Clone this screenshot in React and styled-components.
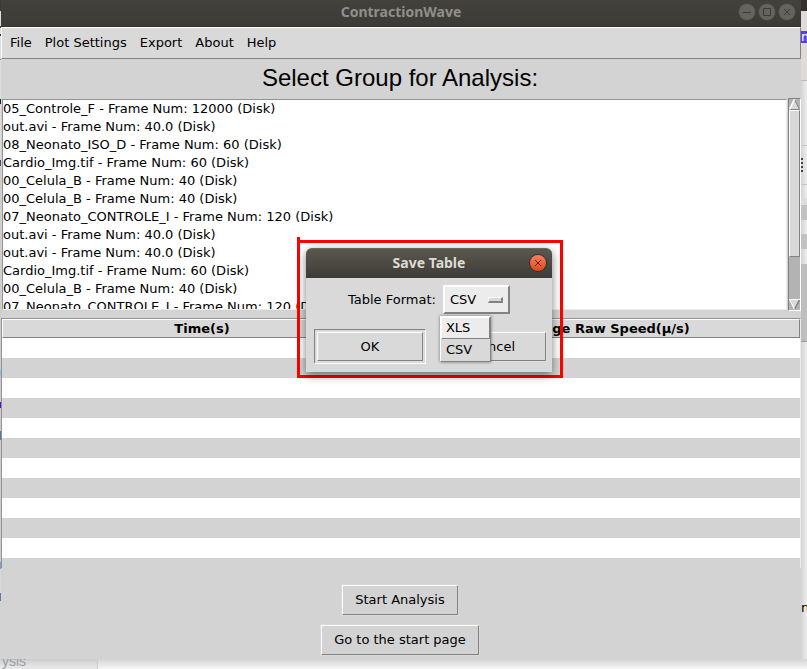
import React from "react";
import styled, { createGlobalStyle, css } from "styled-components";

const GlobalStyle = createGlobalStyle`
  *, *::before, *::after { box-sizing: border-box; }
  body {
    margin: 0;
    background: #f4f4f4;
    color: #000;
    font: 13px/18px "DejaVu Sans", sans-serif;
  }
  button, select { font: inherit; color: inherit; border-radius: 0; }
`;

const Desktop = styled.div`
  position: relative;
  display: grid;
  grid-template-columns: 1px minmax(0, 1fr) 6px;
  grid-template-rows: auto minmax(10px, 1fr);
  min-height: 100vh;
  overflow: hidden;
`;

const LeftEdge = styled.div`
  background: linear-gradient(
    #3c3b37 11px, #dedede 11px 26px, #444 26px 28px, #ddd 28px 34px, #333 34px 36px,
    #ddd 36px 59px, #888 59px 60px, #ddd 60px 99px, #124 99px 104px, #ddd 104px 160px,
    #447 160px 166px, #ccc 166px 370px, #8cc4e4 370px 377px, #ccc 377px 402px,
    #5010c8 402px 408px, #ccc 408px 431px, #5078b8 431px 440px, #ccc 440px 562px,
    #6fa2d8 562px 569px, #d8d8d8 569px 593px, #6478b0 593px 601px, #d0d4d8 601px
  );
`;

const RightEdge = styled.div`
  display: flex;
  flex-direction: column;
  overflow: hidden;
  background: #f0f0f0;
  box-shadow: inset 6px 0 6px -4px rgba(0, 0, 0, 0.16);
`;

const Strip = styled.div`
  flex: none;
  height: ${(p) => p.$h}px;
  background: ${(p) => p.$c || "transparent"};
  color: ${(p) => p.$ink || "#000"};
  line-height: ${(p) => p.$h}px;
  white-space: nowrap;
`;

const Dots = styled.div`
  flex: none;
  width: 2px;
  height: 14px;
  background: repeating-linear-gradient(#444 0 2px, transparent 2px 4px);
`;

const Beneath = styled.div`
  grid-column: 1 / -1;
  display: flex;
  overflow: hidden;
  background: linear-gradient(#d4d4d4, #f6f6f6 10px);
`;

const BeneathLabel = styled.div`
  width: 98px;
  height: 10px;
  padding-left: 2px;
  border-right: 1px solid #ccc;
  background: linear-gradient(#ccc, #e6e6e6 8px);
  color: #999ca4;
  font: 14px/4px "Liberation Sans", Arial, sans-serif;
`;

const AppWindow = styled.main`
  display: flex;
  flex-direction: column;
  background: #d3d3d3;
`;

const TitleBar = styled.header`
  position: relative;
  display: flex;
  align-items: center;
  justify-content: center;
  height: 27px;
  padding-bottom: 3px;
  background: linear-gradient(#42413c, #3c3b37);
  border-bottom: 1px solid #33322f;
  color: #918f88;
  font: bold 14px/20px "Noto Sans", "Open Sans", sans-serif;
`;

const WindowControls = styled.div`
  position: absolute;
  top: 4px;
  right: 6px;
  display: flex;
  gap: 4px;
`;

const RoundButton = styled.button`
  display: grid;
  place-items: center;
  width: 16px;
  height: 16px;
  padding: 0;
  border: 0;
  border-radius: 50%;
  background: ${(p) => (p.$close ? "linear-gradient(#f58060, #de4a1d)" : "#65635d")};
  color: ${(p) => (p.$close ? "#5d2412" : "#3c3b37")};
  box-shadow: 0 0 0 1px ${(p) => (p.$close ? "#35302b" : "#484741")};
  svg { display: block; width: 16px; height: 16px; fill: none; stroke: currentColor; }
`;

const raised = css`
  border: 1px solid;
  border-color: #fff #828282 #828282 #fff;
`;

const MenuBar = styled.nav`
  display: flex;
  gap: 13px;
  height: 32px;
  padding: 0 8px;
  align-items: center;
  background: #d9d9d9;
  ${raised}
`;

const MenuItem = styled.button`
  padding: 0;
  border: 0;
  background: none;
`;

const Heading = styled.h1`
  margin: 0;
  padding: 4px 2px 5px 0;
  text-align: center;
  font: 24px/30px "Liberation Sans", Arial, sans-serif;
`;

const ListArea = styled.section`
  display: flex;
  gap: 1px;
  height: 213px;
`;

const FileList = styled.ul`
  flex: 1;
  min-width: 0;
  height: 211px;
  margin: 1px 0 0 1px;
  padding: 0;
  overflow: hidden;
  list-style: none;
  background: #fff;
  border: 1px solid;
  border-color: #929292 #ececec #ececec #929292;
`;

const FileRow = styled.li`
  height: 18px;
  line-height: 17px;
  white-space: nowrap;
`;

const ScrollTrack = styled.div`
  display: flex;
  flex-direction: column;
  width: 13px;
  background: #b3b3b3;
  border: 1px solid;
  border-color: #828282 #fff #fff #828282;
`;

const ArrowButton = styled.button`
  height: 11px;
  padding: 0;
  border: 0;
  background: none;
  svg { display: block; width: 11px; height: 11px; }
`;

const Thumb = styled.div`
  height: 147px;
  margin-bottom: auto;
  background: #d9d9d9;
  ${raised}
`;

const TableFrame = styled.section`
  margin-top: 7px;
  height: 250px;
  border-left: 1px solid #929292;
  border-top: 1px solid #929292;
  border-right: 1px solid #ececec;
`;

const DataTable = styled.table`
  width: 100%;
  table-layout: fixed;
  border-collapse: separate;
  border-spacing: 0;
  th {
    height: 19px;
    padding: 0;
    background: #d9d9d9;
    border: solid;
    border-width: 1px 0;
    border-color: #fff #828282 #828282 #fff;
    font-size: 13px;
    line-height: 17px;
    font-weight: bold;
  }
  th:first-child { border-left-width: 1px; }
  th:last-child { border-right-width: 1px; }
  td { height: 20px; padding: 0; background: #fff; }
  tr:nth-child(even) td { background: #d3d3d3; }
`;

const Footer = styled.footer`
  display: flex;
  flex-direction: column;
  align-items: center;
  gap: 10px;
  padding: 17px 2px 4px 0;
`;

const PushButton = styled.button`
  height: 30px;
  padding: 0 12px;
  background: ${(p) => p.$bg || "#d3d3d3"};
  ${raised}
  box-shadow: 0 0 0 1px rgba(255, 255, 255, 0.15);
`;

const Highlight = styled.div`
  position: absolute;
  top: 240px;
  left: 297px;
  padding: 5px 8px 3px 6px;
  border: 3px solid #f00;
  &::before {
    content: "";
    position: absolute;
    top: -6px;
    left: -3px;
    width: 3px;
    height: 6px;
    background: #f00;
  }
`;

const Dialog = styled.section`
  width: 246px;
  background: #d9d9d9;
  border-radius: 6px 6px 0 0;
  box-shadow: 0 3px 10px rgba(0, 0, 0, 0.5);
`;

const DialogTitle = styled.header`
  position: relative;
  height: 30px;
  border-radius: 6px 6px 0 0;
  background: linear-gradient(#5a574e, #3d3c37);
  border-top: 1px solid #69665c;
  color: #dfdbd2;
  text-align: center;
  font: bold 14px/27px "Noto Sans", "Open Sans", sans-serif;
  ${RoundButton} { position: absolute; top: 6px; right: 6px; }
`;

const DialogBody = styled.form`
  padding: 7px 3px 8px 8px;
`;

const FormatRow = styled.div`
  display: flex;
  align-items: center;
  gap: 7px;
  padding-left: 34px;
`;

const SelectWrap = styled.div`
  position: relative;
  width: 67px;
  height: 29px;
`;

const FormatSelect = styled.select`
  appearance: none;
  width: 100%;
  height: 100%;
  padding: 0 0 0 5px;
  background: #ececec;
  border: 2px solid;
  border-color: #fff #828282 #828282 #fff;
`;

const Indicator = styled.span`
  position: absolute;
  top: 12px;
  right: 7px;
  width: 15px;
  height: 6px;
  background: #d9d9d9;
  border: solid;
  border-width: 1px 2px 2px 1px;
  border-color: #fff #828282 #828282 #fff;
  pointer-events: none;
`;

const Options = styled.div`
  position: absolute;
  z-index: 1;
  top: 31px;
  left: -3px;
  width: 51px;
  background: #d9d9d9;
  ${raised}
  box-shadow: 0 0 3px rgba(0, 0, 0, 0.5);
`;

const Option = styled.button`
  display: block;
  width: 100%;
  height: 22px;
  padding: 0 4px 1px;
  text-align: left;
  background: ${(p) => (p.$active ? "#ececec" : "#d9d9d9")};
  border: 1px solid;
  border-color: ${(p) => (p.$active ? "#fff #828282 #828282 #fff" : "#d9d9d9")};
`;

const Actions = styled.div`
  display: grid;
  grid-template-columns: 112px 1fr;
  gap: 11px;
  margin-top: 15px;
  ${PushButton} { height: 29px; }
`;

const ActionSlot = styled.div`
  display: grid;
  padding: 2px;
  border: 1px solid;
  border-color: ${(p) => (p.$default ? "#828282 #fff #fff #828282" : "transparent")};
`;

const files = [
  "05_Controle_F - Frame Num: 12000 (Disk)",
  "out.avi - Frame Num: 40.0 (Disk)",
  "08_Neonato_ISO_D - Frame Num: 60 (Disk)",
  "Cardio_Img.tif - Frame Num: 60 (Disk)",
  "00_Celula_B - Frame Num: 40 (Disk)",
  "00_Celula_B - Frame Num: 40 (Disk)",
  "07_Neonato_CONTROLE_I - Frame Num: 120 (Disk)",
  "out.avi - Frame Num: 40.0 (Disk)",
  "out.avi - Frame Num: 40.0 (Disk)",
  "Cardio_Img.tif - Frame Num: 60 (Disk)",
  "00_Celula_B - Frame Num: 40 (Disk)",
  "07_Neonato_CONTROLE_I - Frame Num: 120 (Disk)",
];

const menus = ["File", "Plot Settings", "Export", "About", "Help"];

const CloseGlyph = () => (
  <svg viewBox="0 0 16 16"><path d="M5 5l6 6M11 5l-6 6" /></svg>
);

function Scrollbar() {
  return (
    <ScrollTrack>
      <ArrowButton aria-label="Scroll up">
        <svg viewBox="0 0 11 11">
          <path d="M5.5 0L11 11H0z" fill="#d9d9d9" />
          <path d="M5.5 0.5L10.5 10.5H0" fill="none" stroke="#828282" />
          <path d="M5.5 0L0.5 10.5" stroke="#fff" strokeWidth="1.5" />
        </svg>
      </ArrowButton>
      <Thumb />
      <ArrowButton aria-label="Scroll down">
        <svg viewBox="0 0 11 11">
          <path d="M0 0H11L5.5 11z" fill="#d9d9d9" />
          <path d="M10.5 0.5L5.5 10.5" stroke="#828282" strokeWidth="1.5" />
          <path d="M11 0.5H0.5L5.5 10.5" fill="none" stroke="#fff" />
        </svg>
      </ArrowButton>
    </ScrollTrack>
  );
}

function SaveDialog() {
  return (
    <Highlight>
      <Dialog role="dialog" aria-label="Save Table">
        <DialogTitle>
          Save Table
          <RoundButton $close aria-label="Close dialog"><CloseGlyph /></RoundButton>
        </DialogTitle>
        <DialogBody onSubmit={(e) => e.preventDefault()}>
          <FormatRow>
            <label htmlFor="format">Table Format:</label>
            <SelectWrap>
              <FormatSelect id="format" defaultValue="CSV">
                <option>XLS</option>
                <option>CSV</option>
              </FormatSelect>
              <Indicator />
              <Options>
                <Option type="button" $active>XLS</Option>
                <Option type="button">CSV</Option>
              </Options>
            </SelectWrap>
          </FormatRow>
          <Actions>
            <ActionSlot $default><PushButton $bg="#d9d9d9">OK</PushButton></ActionSlot>
            <ActionSlot><PushButton type="button" $bg="#d9d9d9">Cancel</PushButton></ActionSlot>
          </Actions>
        </DialogBody>
      </Dialog>
    </Highlight>
  );
}

export default function App() {
  return (
    <>
      <GlobalStyle />
      <Desktop>
        <LeftEdge />
        <AppWindow>
          <TitleBar>
            ContractionWave
            <WindowControls>
              <RoundButton aria-label="Minimize">
                <svg viewBox="0 0 16 16"><path d="M4 8.5h8" /></svg>
              </RoundButton>
              <RoundButton aria-label="Maximize">
                <svg viewBox="0 0 16 16"><path d="M4.5 4.5h7v7h-7z" /></svg>
              </RoundButton>
              <RoundButton aria-label="Close"><CloseGlyph /></RoundButton>
            </WindowControls>
          </TitleBar>
          <MenuBar>
            {menus.map((m) => <MenuItem key={m}>{m}</MenuItem>)}
          </MenuBar>
          <Heading>Select Group for Analysis:</Heading>
          <ListArea>
            <FileList>
              {files.map((f, i) => <FileRow key={i}>{f}</FileRow>)}
            </FileList>
            <Scrollbar />
          </ListArea>
          <TableFrame>
            <DataTable>
              <thead>
                <tr><th>Time(s)</th><th>Average Raw Speed(μ/s)</th></tr>
              </thead>
              <tbody>
                {Array.from({ length: 11 }, (_, i) => <tr key={i}><td /><td /></tr>)}
              </tbody>
            </DataTable>
          </TableFrame>
          <Footer>
            <PushButton>Start Analysis</PushButton>
            <PushButton>Go to the start page</PushButton>
          </Footer>
        </AppWindow>
        <RightEdge>
          <Strip $h={11} $c="#32312e" />
          <Strip $h={20} $c="#dedbd8" />
          <Strip $h={12} $c="#5b3fe0" $ink="#fff">m</Strip>
          <Strip $h={37} $c="#dedbd8" />
          <Strip $h={1} $c="#bbb" />
          <Strip $h={64} />
          <Strip $h={1} $c="#c4c4c4" />
          <Strip $h={12} />
          <Dots />
          <Strip $h={12} />
          <Strip $h={1} $c="#c4c4c4" />
          <Strip $h={13} />
          <Strip $h={7} $c="#ddd" />
          <Strip $h={15} $c="#c2c2c2" />
          <Strip $h={14} />
          <Strip $h={15} $c="#c2c2c2" />
          <Strip $h={15} />
          <Strip $h={77} $c="#bebebe" />
          <Strip $h={1} $c="#999" />
          <Strip $h={257} />
          <Strip $h={18}>n</Strip>
        </RightEdge>
        <Beneath><BeneathLabel>ysis</BeneathLabel></Beneath>
        <SaveDialog />
      </Desktop>
    </>
  );
}
